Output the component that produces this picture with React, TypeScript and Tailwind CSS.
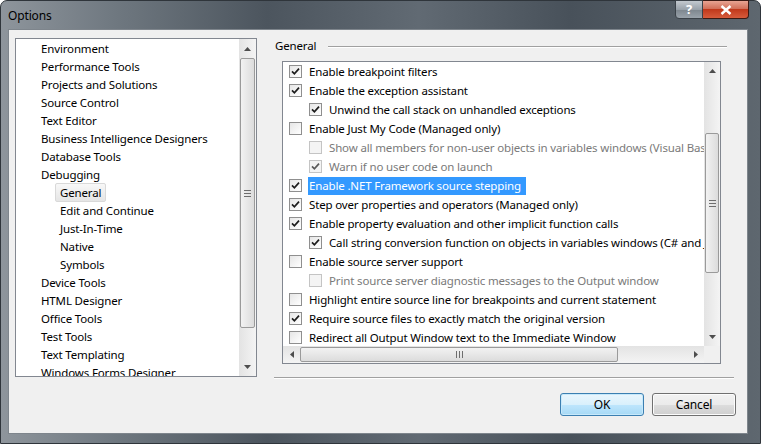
import React from 'react';

const font = { fontFamily: '"Noto Sans", "Open Sans", Arial, sans-serif', letterSpacing: '-0.15px' };

type TreeItem = { label: string; child?: boolean; selected?: boolean };

const TREE: TreeItem[] = [
    { label: 'Environment' },
    { label: 'Performance Tools' },
    { label: 'Projects and Solutions' },
    { label: 'Source Control' },
    { label: 'Text Editor' },
    { label: 'Business Intelligence Designers' },
    { label: 'Database Tools' },
    { label: 'Debugging' },
    { label: 'General', child: true, selected: true },
    { label: 'Edit and Continue', child: true },
    { label: 'Just-In-Time', child: true },
    { label: 'Native', child: true },
    { label: 'Symbols', child: true },
    { label: 'Device Tools' },
    { label: 'HTML Designer' },
    { label: 'Office Tools' },
    { label: 'Test Tools' },
    { label: 'Text Templating' },
    { label: 'Windows Forms Designer' },
];

type Opt = { label: string; checked: boolean; indent?: boolean; disabled?: boolean; selected?: boolean };

const OPTIONS: Opt[] = [
    { label: 'Enable breakpoint filters', checked: true },
    { label: 'Enable the exception assistant', checked: true },
    { label: 'Unwind the call stack on unhandled exceptions', checked: true, indent: true },
    { label: 'Enable Just My Code (Managed only)', checked: false },
    { label: 'Show all members for non-user objects in variables windows (Visual Basic only)', checked: false, indent: true, disabled: true },
    { label: 'Warn if no user code on launch', checked: true, indent: true, disabled: true },
    { label: 'Enable .NET Framework source stepping', checked: true, selected: true },
    { label: 'Step over properties and operators (Managed only)', checked: true },
    { label: 'Enable property evaluation and other implicit function calls', checked: true },
    { label: 'Call string conversion function on objects in variables windows (C# and JavaScript only)', checked: true, indent: true },
    { label: 'Enable source server support', checked: false },
    { label: 'Print source server diagnostic messages to the Output window', checked: false, indent: true, disabled: true },
    { label: 'Highlight entire source line for breakpoints and current statement', checked: false },
    { label: 'Require source files to exactly match the original version', checked: true },
    { label: 'Redirect all Output Window text to the Immediate Window', checked: false },
];

const CheckBox: React.FC<{ checked: boolean; disabled?: boolean }> = ({ checked, disabled }) => (
    <div
        className={`w-[13px] h-[13px] shrink-0 border flex items-center justify-center ${disabled
            ? 'border-[#c4c4c4] bg-[#f4f4f4]'
            : 'border-[#8f8f8f] bg-[linear-gradient(135deg,#e6e6e6,#ffffff)]'
            }`}
    >
        {checked && (
            <svg width="9" height="9" viewBox="0 0 9 9">
                <path d="M1 4.3 L3.4 6.8 L8 1.6" fill="none" stroke={disabled ? '#5a5a5a' : '#1c1c1c'} strokeWidth="1.7" />
            </svg>
        )}
    </div>
);

const Arrow: React.FC<{ dir: 'up' | 'down' | 'left' | 'right' }> = ({ dir }) => {
    const pts = {
        up: '0,4 3.5,0 7,4',
        down: '0,0 3.5,4 7,0',
        left: '4,0 0,3.5 4,7',
        right: '0,0 4,3.5 0,7',
    }[dir];
    const horiz = dir === 'left' || dir === 'right';
    return (
        <svg width={horiz ? 4 : 7} height={horiz ? 7 : 4} viewBox={horiz ? '0 0 4 7' : '0 0 7 4'}>
            <polygon points={pts} fill="#4d4d4d" />
        </svg>
    );
};

const Grip: React.FC<{ vertical?: boolean }> = ({ vertical }) => (
    <div className={`flex ${vertical ? 'flex-col gap-[2px]' : 'flex-row gap-[2px]'}`}>
        {[0, 1, 2].map(i => (
            <div key={i} className={vertical ? 'w-[7px] h-[1px] bg-[#6e6e6e]' : 'w-[1px] h-[7px] bg-[#6e6e6e]'} />
        ))}
    </div>
);

export default function App() {
    return (
        <div className="w-[761px] h-[444px] bg-white overflow-hidden" style={font}>
            <div className="w-[761px] h-[444px] rounded-t-[7px] border border-[#2f353b] bg-[linear-gradient(90deg,#8e959c_0%,#6f7880_15%,#4c555e_35%,#616a73_55%,#48515a_75%,#5e676f_100%)] flex flex-col">
                {/* Title bar */}
                <div className="h-[28px] shrink-0 flex items-start justify-between pl-[7px] pr-[11px]">
                    <span className="text-[12px] leading-[30px] text-black">Options</span>
                    <div className="flex h-[19px] -mt-[1px]">
                        <div className="w-[28px] h-[19px] rounded-bl-[4px] border border-[#3b4249] bg-[linear-gradient(180deg,#c3c9cf_0%,#99a2aa_50%,#7d868e_51%,#9aa3ab_100%)] flex items-center justify-center text-white text-[13px] font-bold leading-none">
                            ?
                        </div>
                        <div className="w-[46px] h-[19px] rounded-br-[4px] border border-l-0 border-[#3b1a14] bg-[linear-gradient(180deg,#e8a493_0%,#d2705a_45%,#c1391c_50%,#d75b3b_100%)] flex items-center justify-center">
                            <svg width="12" height="10" viewBox="0 0 12 10">
                                <path d="M1.5 1 L10.5 9 M10.5 1 L1.5 9" stroke="#fff" strokeWidth="2.4" />
                            </svg>
                        </div>
                    </div>
                </div>

                {/* Client area */}
                <div className="ml-[7px] mr-[12px] h-[405px] bg-[#f0f0f0] border border-[#7e858c] flex flex-col text-[11.5px] text-black">
                    <div className="flex pl-[6px] pt-[8px]">
                        {/* Tree */}
                        <div className="w-[242px] h-[339px] bg-white border border-[#828790] flex overflow-hidden">
                            <div className="flex-1 overflow-hidden">
                                {TREE.map(item => (
                                    <div key={item.label} className={`h-[18px] flex items-center ${item.child ? 'pl-[44px]' : 'pl-[25px]'}`}>
                                        <span
                                            className={`whitespace-nowrap leading-[17px] ${item.selected
                                                ? '-ml-[5px] px-[4px] border border-[#d9d9d9] rounded-[2px] bg-[linear-gradient(180deg,#f8f8f8,#e5e5e5)]'
                                                : ''
                                                }`}
                                        >
                                            {item.label}
                                        </span>
                                    </div>
                                ))}
                            </div>
                            {/* Tree scrollbar */}
                            <div className="w-[17px] h-full bg-[linear-gradient(90deg,#e3e3e3,#f4f4f4)] flex flex-col items-center">
                                <div className="h-[19px] w-full flex items-center justify-center">
                                    <Arrow dir="up" />
                                </div>
                                <div className="w-[15px] h-[270px] rounded-[2px] border border-[#9a9a9a] bg-[linear-gradient(90deg,#f2f2f2,#dcdcdc)] flex items-center justify-center">
                                    <Grip vertical />
                                </div>
                                <div className="flex-1" />
                                <div className="h-[19px] w-full flex items-center justify-center">
                                    <Arrow dir="down" />
                                </div>
                            </div>
                        </div>

                        {/* Right panel */}
                        <div className="ml-[18px] flex flex-col">
                            <div className="h-[23px] w-[452px] flex items-start">
                                <span className="leading-[16px]">General</span>
                                <div className="ml-[12px] mt-[8px] flex-1 h-[1px] bg-[#a0a0a0] shadow-[0_1px_0_#ffffff]" />
                            </div>
                            <div className="ml-[7px] w-[439px] h-[303px] bg-white border border-[#828790] flex flex-col overflow-hidden">
                                <div className="flex flex-1 min-h-0">
                                    <div className="flex-1 overflow-hidden pl-[6px]">
                                        {OPTIONS.map(o => (
                                            <div key={o.label} className={`h-[19px] flex items-center ${o.indent ? 'pl-[20px]' : ''}`}>
                                                <CheckBox checked={o.checked} disabled={o.disabled} />
                                                <span
                                                    className={`ml-[6px] whitespace-nowrap leading-[18px] pl-[1px] pr-[5px] ${o.selected
                                                        ? 'bg-[#3399ff] text-white'
                                                        : o.disabled
                                                            ? 'text-[#7a7a7a]'
                                                            : ''
                                                        }`}
                                                >
                                                    {o.label}
                                                </span>
                                            </div>
                                        ))}
                                    </div>
                                    {/* Vertical scrollbar */}
                                    <div className="w-[16px] h-full bg-[linear-gradient(90deg,#e3e3e3,#f4f4f4)] flex flex-col items-center">
                                        <div className="h-[18px] w-full flex items-center justify-center">
                                            <Arrow dir="up" />
                                        </div>
                                        <div className="h-[53px]" />
                                        <div className="w-[14px] h-[140px] rounded-[2px] border border-[#9a9a9a] bg-[linear-gradient(90deg,#f2f2f2,#dcdcdc)] flex items-center justify-center">
                                            <Grip vertical />
                                        </div>
                                        <div className="flex-1" />
                                        <div className="h-[18px] w-full flex items-center justify-center">
                                            <Arrow dir="down" />
                                        </div>
                                    </div>
                                </div>
                                {/* Horizontal scrollbar */}
                                <div className="h-[17px] shrink-0 flex">
                                    <div className="flex-1 bg-[linear-gradient(180deg,#e3e3e3,#f4f4f4)] flex items-center">
                                        <div className="w-[17px] h-full flex items-center justify-center">
                                            <Arrow dir="left" />
                                        </div>
                                        <div className="w-[318px] h-[15px] rounded-[2px] border border-[#9a9a9a] bg-[linear-gradient(180deg,#f2f2f2,#dcdcdc)] flex items-center justify-center">
                                            <Grip />
                                        </div>
                                        <div className="flex-1" />
                                        <div className="w-[17px] h-full flex items-center justify-center">
                                            <Arrow dir="right" />
                                        </div>
                                    </div>
                                    <div className="w-[16px] bg-[#f0f0f0]" />
                                </div>
                            </div>
                            <div className="-ml-[1px] mt-[13px] w-[460px] h-[1px] bg-[#a0a0a0] shadow-[0_1px_0_#ffffff]" />
                        </div>
                    </div>

                    {/* Buttons */}
                    <div className="flex justify-end gap-[8px] mt-[15px] pr-[11px]">
                        <button className="w-[84px] h-[23px] rounded-[3px] border border-[#3c7fb1] bg-[linear-gradient(180deg,#eaf6fd_0%,#d9f0fc_50%,#bee6fd_51%,#a7d9f5_100%)] shadow-[inset_0_0_0_1px_#c7e9fb] text-[12px]">
                            OK
                        </button>
                        <button className="w-[84px] h-[23px] rounded-[3px] border border-[#707070] bg-[linear-gradient(180deg,#f2f2f2_0%,#ebebeb_50%,#dddddd_51%,#cfcfcf_100%)] shadow-[inset_0_0_0_1px_#fcfcfc] text-[12px]">
                            Cancel
                        </button>
                    </div>
                </div>
            </div>
        </div>
    );
}
